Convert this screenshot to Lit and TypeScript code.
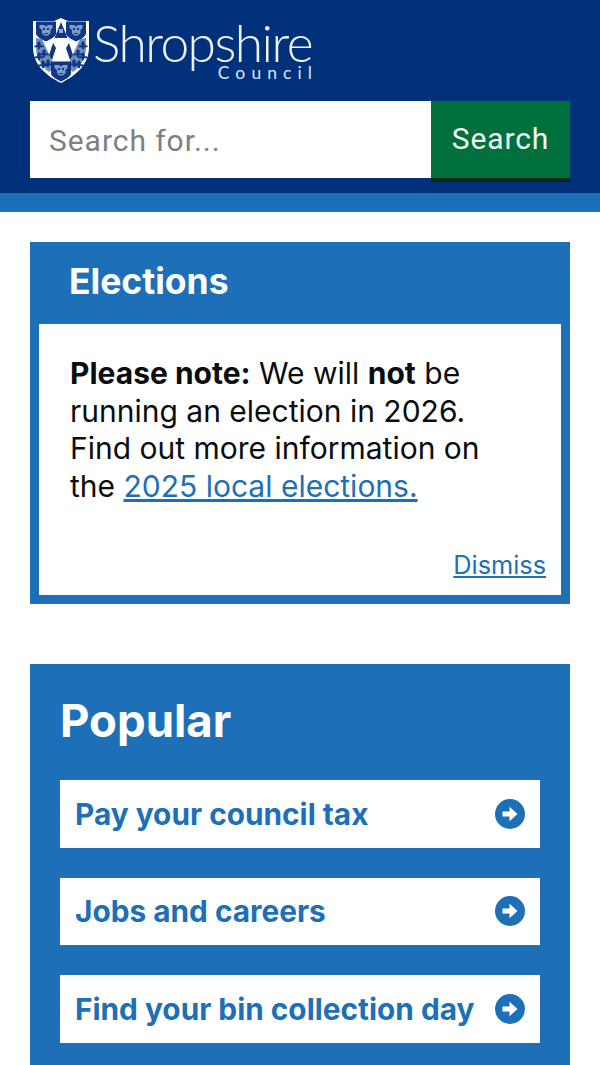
import { LitElement, html, svg, css } from "lit";
import { customElement } from "lit/decorators.js";

const arrow = html`<svg class="arrow" viewBox="0 0 30 30" width="30" height="30" aria-hidden="true"><circle cx="15" cy="15" r="15" fill="#1d70b8"></circle><path d="M7.500 12.600h7V7.800l8 7.200-8 7.200v-4.800h-7z" fill="#fff"></path></svg>`;

const fleur = (x: number, y: number) =>
  svg`<path transform="translate(${x} ${y}) scale(1.25)" d="M0-4c1.600 1.200 1.800 2.600 1 3.600 1.200-.6 2.600-.2 3 1.200-1 .2-2 .4-3 .2L.6 2.600h-1.200L-1 1c-1 .2-2 0-3-.2.4-1.400 1.800-1.800 3-1.200C-1.800-1.400-1.600-2.800 0-4z" fill="#0f3782"></path>`;

const face = (x: number, y: number) => svg`
  <g transform="translate(${x} ${y})">
    <path d="M-10-8.500h20v12c0 3-6 6-10 8-4-2-10-5-10-8z" fill="#0f3782"></path>
    <path d="M-6.500-5h4.500l2 1.500 2-1.500h4.500v3l-2 2v3l-2.500 2.500h-4L-4 3v-3l-2.500-2z" fill="#7f9bc9"></path>
    <path d="M-3-2h2v2h-2zM1-2h2v2H1zM-2 3h4v1h-4z" fill="#0f3782"></path>
  </g>`;

@customElement("app-root")
export class AppRoot extends LitElement {
  static styles = css`
    :host { display: block; width: 600px; height: 1065px; overflow: hidden; background: #fff; font-family: Inter, "Liberation Sans", sans-serif; color: #0b0c0c; }
    .header { background: #00317a; padding: 16px 30px 15px; }
    .logo { display: flex; align-items: flex-start; gap: 4px; height: 85px; color: #fff; }
    .shield { display: block; margin: 2px 0 0 3px; flex: none; filter: blur(0.4px); }
    .wordmark { display: flex; flex-direction: column; align-items: flex-end; }
    .name { font-family: Lato, sans-serif; font-weight: 300; font-size: 51.5px; line-height: 50px; letter-spacing: -1.55px; color: #eef2f9; margin-top: 1px; }
    .council { font-family: Lato, sans-serif; font-size: 17.5px; line-height: 14px; letter-spacing: 6.1px; margin-right: -6.1px; margin-top: -1px; color: #dfe6f2; }
    .search { display: flex; height: 77px; font-family: Roboto, sans-serif; }
    .input { flex: 1; background: #fff; padding: 2px 0 0 19px; display: flex; align-items: center; color: #808080; font-size: 30px; letter-spacing: 0.95px; }
    .btn { width: 139px; height: 77px; background: #00703c; color: #f2f8f4; font-size: 30px; letter-spacing: 0.9px; display: flex; align-items: center; justify-content: center; box-shadow: 0 4px 0 #002d18; padding-bottom: 2px; box-sizing: border-box; }
    .stripe { height: 19px; background: #1d70b8; }
    main { padding: 30px 30px 0; }
    .notice { background: #1d70b8; padding: 0 9px 9px; }
    .notice h2 { margin: 0; color: #fff; font-size: 35.5px; font-weight: 700; line-height: 80px; padding: 0 0 2px 30px; }
    .notice-body { background: #fff; padding: 31px 15px 15px 31px; font-size: 30px; line-height: 37.5px; }
    .notice-body p { margin: 0; padding-right: 15px; }
    a { color: #1d70b8; }
    .dismiss { display: block; text-align: right; font-size: 25.3px; line-height: 30px; margin-top: 45px; }
    .popular { margin-top: 60px; background: #1d70b8; padding: 29px 30px 30px; }
    .popular h2 { margin: 0 0 31px; color: #fff; font-size: 45.5px; font-weight: 700; line-height: 56px; }
    .list { display: flex; flex-direction: column; gap: 30px; }
    .item { background: #fff; height: 67.5px; display: flex; align-items: center; justify-content: space-between; padding: 0 15px; color: #1d70b8; font-size: 29.8px; font-weight: 700; }
    .arrow { flex: none; }
  `;

  render() {
    return html`
      <div class="header">
        <div class="logo">
          <svg class="shield" width="56" height="65" viewBox="0 0 56 65" aria-label="Shropshire Council crest">
            <path d="M0 3h21l7-3 7 3h21v26c0 17-12 28-28 36C12 57 0 46 0 29z" fill="#fff"></path>
            <path d="M3 20l6 1 13 28-6 5C8 48 3 40 3 29zM53 20l-6 1-13 28 6 5c8-6 13-14 13-25z" fill="#6d8cc0"></path>
            ${face(13, 12)}${face(43, 12)}${face(28, 52)}
            <path d="M28 4l6.500 16h-13z" fill="#0f3782"></path>
            <path d="M26 11h4v4h-4z" fill="#8ea8d2"></path>
            <path d="M20 25l3 5-4 12-3-5zM36 25l-3 5 4 12 3-5z" fill="#0f3782"></path>
            ${fleur(6, 28)}${fleur(11, 36)}${fleur(6, 39)}${fleur(15, 46)}${fleur(10, 47)}
            ${fleur(50, 28)}${fleur(45, 36)}${fleur(50, 39)}${fleur(41, 46)}${fleur(46, 47)}
          </svg>
          <div class="wordmark">
            <span class="name">Shropshire</span>
            <span class="council">Council</span>
          </div>
        </div>
        <div class="search">
          <div class="input">Search for...</div>
          <div class="btn">Search</div>
        </div>
      </div>
      <div class="stripe"></div>
      <main>
        <section class="notice">
          <h2>Elections</h2>
          <div class="notice-body">
            <p><b>Please note:</b> We will <b>not</b> be running an election in 2026. Find out more information on the <a href="#">2025 local elections.</a></p>
            <a class="dismiss" href="#">Dismiss</a>
          </div>
        </section>
        <section class="popular">
          <h2>Popular</h2>
          <div class="list">
            <div class="item">Pay your council tax ${arrow}</div>
            <div class="item">Jobs and careers ${arrow}</div>
            <div class="item">Find your bin collection day ${arrow}</div>
          </div>
        </section>
      </main>
    `;
  }
}
